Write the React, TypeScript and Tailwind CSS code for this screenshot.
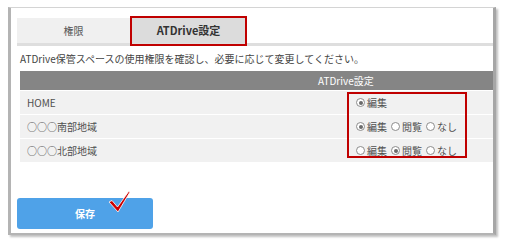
import React from 'react';

type Choice = { label: string; checked: boolean };
type Area = { name: string; choices: Choice[] };

const AREAS: Area[] = [
  { name: 'HOME', choices: [{ label: '編集', checked: true }] },
  {
    name: '○○○南部地域',
    choices: [
      { label: '編集', checked: true },
      { label: '閲覧', checked: false },
      { label: 'なし', checked: false },
    ],
  },
  {
    name: '○○○北部地域',
    choices: [
      { label: '編集', checked: false },
      { label: '閲覧', checked: true },
      { label: 'なし', checked: false },
    ],
  },
];

const Radio = ({ checked }: { checked: boolean }) => (
  <span className="w-[9px] h-[9px] rounded-full border border-[#8c8c8c] bg-white flex items-center justify-center shrink-0">
    {checked && <span className="w-[4px] h-[4px] rounded-full bg-[#6b6b6b]" />}
  </span>
);

const App: React.FC = () => {
  return (
    <div className="w-[505px] h-[245px] bg-white pt-[7px] pl-[8px] font-['Noto_Sans_CJK_JP','Noto_Sans',sans-serif] text-[#4a4a4a]">
      <div className="w-[488px] h-[228px] bg-white border-t border-t-[#d4d4d4] border-l-[3px] border-l-[#b4b4b4] border-r-[3px] border-r-[#a6a6a6] border-b-[2px] border-b-[#b4b4b4] shadow-[2px_2px_2px_rgba(0,0,0,0.25)] pl-[6px] pt-[10px]">
        {/* tabs */}
        <div className="flex h-[25px]">
          <div className="w-[113px] bg-[#f0f0f0] flex items-center justify-center text-[10px] text-[#555]">
            権限
          </div>
          <div className="relative w-[117px] bg-[#dcdcdc] flex items-center justify-center text-[11px] font-bold text-[#333]">
            ATDrive設定
            <span className="absolute left-0 right-0 -top-[2px] -bottom-[3px] border-[2.5px] border-[#c00000]" />
          </div>
        </div>
        <div className="h-[3px] bg-[#dedede]" />

        <div className="pl-[3px]">
          <p className="h-[25px] flex items-center text-[10px] text-[#444]">
            ATDrive保管スペースの使用権限を確認し、必要に応じて変更してください。
          </p>

          <div className="h-[19px] bg-[#858585] flex items-center pl-[298px] text-[10px] text-white">
            ATDrive設定
          </div>

          <div className="relative flex flex-col gap-[1px] pt-[1px]">
            {AREAS.map((area) => (
              <div key={area.name} className="h-[23px] bg-[#f1f1f1] flex items-center text-[10px]">
                <div className="w-[327px] pl-[7px] text-[#505050]">{area.name}</div>
                <div className="flex items-center pl-[9px] gap-[4px]">
                  {area.choices.map((c) => (
                    <label key={c.label} className="flex items-center gap-[2px] text-[#505050]">
                      <Radio checked={c.checked} />
                      <span>{c.label}</span>
                    </label>
                  ))}
                </div>
              </div>
            ))}
            <span className="absolute left-[327px] top-[2px] w-[120px] h-[66px] border-[2.5px] border-[#c00000]" />
          </div>
        </div>

        <div className="relative mt-[36px] w-[136px] h-[31px] rounded-[3px] bg-[#4fa2e8] flex items-center justify-center text-[10px] font-bold text-white">
          保存
          <svg className="absolute left-[91px] -top-[8px]" width="24" height="24" viewBox="0 0 24 24">
            <path
              d="M1 12 L4 10.5 L9.5 17 L21 1 L22 2 L10 22 Z"
              fill="#cc0000"
              stroke="#ffffff"
              strokeWidth="0.8"
              strokeLinejoin="round"
            />
          </svg>
        </div>
      </div>
    </div>
  );
};

export default App;
